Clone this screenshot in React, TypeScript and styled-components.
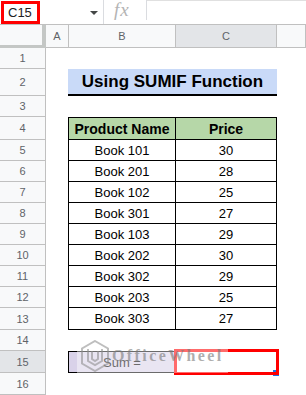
import React from "react";
import styled, { createGlobalStyle } from "styled-components";

const GlobalStyle = createGlobalStyle`
  html, body { margin: 0; padding: 0; background: #ffffff; }
  body {
    font-family: Arial, "Liberation Sans", sans-serif;
    width: 306px;
    height: 395px;
    overflow: hidden;
  }
`;

const BODY_COLS = "46px 22px 108px 101px 1fr";
const HEAD_COLS = "46px 23px 107px 101px 1fr";

const Page = styled.div`
  position: relative;
  width: 306px;
  height: 395px;
  overflow: hidden;
  background: #ffffff;
`;

/* ---------- Formula bar ---------- */
const FormulaBar = styled.div`
  display: flex;
  align-items: flex-start;
  height: 25px;
  box-sizing: border-box;
  border-bottom: 1px solid #c0c0c0;
`;

const NameArea = styled.div`
  display: flex;
  align-items: flex-start;
  width: 104px;
  height: 24px;
  box-sizing: border-box;
  border-right: 1px solid #dadce0;
`;

const NameBox = styled.div`
  box-sizing: border-box;
  margin: 1px 0 0 1px;
  width: 39px;
  height: 23px;
  border: 3px solid #ff0000;
  padding-left: 4px;
  display: flex;
  align-items: center;
  font-size: 13px;
  color: #202124;
`;

const DropArrow = styled.svg`
  margin: 11px 0 0 50px;
`;

const FxBox = styled.div`
  width: 43px;
  height: 20px;
  box-sizing: border-box;
  border-right: 1px solid #dadce0;
  display: flex;
  align-items: center;
  padding-left: 10px;
  font-family: "Liberation Serif", "Times New Roman", serif;
  font-style: italic;
  font-size: 19px;
  line-height: 20px;
  letter-spacing: 1px;
  color: #b4b4b4;
`;

const FormulaInput = styled.div`
  flex: 1;
  height: 19px;
  border-top: 1px solid #e0e0e0;
`;

/* ---------- Grid ---------- */
const Sheet = styled.div`
  display: flex;
  flex-direction: column;
`;

const Row = styled.div<{ $h: number; $cols: string }>`
  display: grid;
  grid-template-columns: ${(p) => p.$cols};
  height: ${(p) => p.$h}px;
`;

const Corner = styled.div`
  box-sizing: border-box;
  background: #f8f9fa;
  border-right: 4px solid #c4c7c5;
  border-bottom: 3px solid #c4c7c5;
`;

const ColHeader = styled.div<{ $sel?: boolean }>`
  box-sizing: border-box;
  background: ${(p) => (p.$sel ? "#e3e5e8" : "#f8f9fa")};
  border-right: 1px solid #c0c0c0;
  border-bottom: 1px solid #c0c0c0;
  display: flex;
  align-items: center;
  justify-content: center;
  font-size: 11px;
  color: #5f6368;
`;

const RowHeader = styled.div<{ $sel?: boolean }>`
  box-sizing: border-box;
  background: ${(p) => (p.$sel ? "#e3e5e8" : "#f8f9fa")};
  border-right: 1px solid #c0c0c0;
  border-bottom: 1px solid #c0c0c0;
  display: flex;
  align-items: center;
  justify-content: center;
  font-size: 11px;
  color: #5f6368;
`;

const Blank = styled.div``;

const TitleCell = styled.div`
  grid-column: span 2;
  box-sizing: border-box;
  background: #c9daf8;
  border-bottom: 2px solid #000000;
  display: flex;
  align-items: center;
  justify-content: center;
  padding-top: 1px;
  font-weight: bold;
  font-size: 17px;
  color: #000000;
`;

const TableCell = styled.div<{ $head?: boolean; $left?: boolean; $top?: boolean }>`
  box-sizing: border-box;
  border-right: 1px solid #000000;
  border-bottom: 1px solid #000000;
  ${(p) => (p.$left ? "border-left: 1px solid #000000;" : "")}
  ${(p) => (p.$top ? "border-top: 1px solid #000000;" : "")}
  background: ${(p) => (p.$head ? "#b6d7a8" : "transparent")};
  display: flex;
  align-items: center;
  justify-content: center;
  font-size: ${(p) => (p.$head ? 14 : 13)}px;
  font-weight: ${(p) => (p.$head ? "bold" : "normal")};
  color: #000000;
`;

const SumCell = styled.div`
  box-sizing: border-box;
  border: 1px solid #000000;
  background: #d9d2e9;
  display: flex;
  align-items: center;
  justify-content: center;
  font-size: 13px;
  color: #000000;
`;

const SelCell = styled.div`
  position: relative;
`;

const Selection = styled.div`
  position: absolute;
  left: -2px;
  top: -2px;
  right: -2px;
  bottom: -2px;
  border: 3px solid #ff0000;
  z-index: 2;
`;

const FillHandle = styled.div`
  position: absolute;
  right: -2px;
  bottom: -3px;
  width: 6px;
  height: 6px;
  background: #1a73e8;
  z-index: 1;
`;

/* ---------- Watermark ---------- */
const Watermark = styled.div`
  position: absolute;
  left: 77px;
  top: 337px;
  width: 151px;
  height: 36px;
  background: rgba(255, 255, 255, 0.42);
  z-index: 5;
  display: flex;
  align-items: flex-start;
  pointer-events: none;
`;

const WatermarkLogo = styled.svg`
  margin: 3px 0 0 3px;
  opacity: 0.55;
`;

const WatermarkText = styled.div`
  margin: 10px 0 0 2px;
  font-family: "Liberation Serif", "Times New Roman", serif;
  font-weight: bold;
  font-size: 16px;
  letter-spacing: 2.4px;
  color: rgba(120, 120, 120, 0.6);
`;

const rowHeights = [21, 27, 21, 23, 21, 21, 21, 21, 21, 21, 21, 21, 22, 21, 22, 22];

const data: [string, string][] = [
  ["Book 101", "30"],
  ["Book 201", "28"],
  ["Book 102", "25"],
  ["Book 301", "27"],
  ["Book 103", "29"],
  ["Book 202", "30"],
  ["Book 302", "29"],
  ["Book 203", "25"],
  ["Book 303", "27"],
];

export default function App() {
  const renderCells = (r: number) => {
    if (r === 2) {
      return (
        <>
          <Blank />
          <TitleCell>Using SUMIF Function</TitleCell>
          <Blank />
        </>
      );
    }
    if (r === 4) {
      return (
        <>
          <Blank />
          <TableCell $head $left $top>
            Product Name
          </TableCell>
          <TableCell $head $top>
            Price
          </TableCell>
          <Blank />
        </>
      );
    }
    if (r >= 5 && r <= 13) {
      const [name, price] = data[r - 5];
      return (
        <>
          <Blank />
          <TableCell $left>{name}</TableCell>
          <TableCell>{price}</TableCell>
          <Blank />
        </>
      );
    }
    if (r === 15) {
      return (
        <>
          <Blank />
          <SumCell>Sum =</SumCell>
          <SelCell>
            <FillHandle />
            <Selection />
          </SelCell>
          <Blank />
        </>
      );
    }
    return (
      <>
        <Blank />
        <Blank />
        <Blank />
        <Blank />
      </>
    );
  };

  return (
    <Page>
      <GlobalStyle />
      <FormulaBar>
        <NameArea>
          <NameBox>C15</NameBox>
          <DropArrow width="8" height="4" viewBox="0 0 8 4">
            <path d="M0 0 L8 0 L4 4 Z" fill="#444746" />
          </DropArrow>
        </NameArea>
        <FxBox>fx</FxBox>
        <FormulaInput />
      </FormulaBar>
      <Sheet>
        <Row $h={23} $cols={HEAD_COLS}>
          <Corner />
          <ColHeader>A</ColHeader>
          <ColHeader>B</ColHeader>
          <ColHeader $sel>C</ColHeader>
          <ColHeader />
        </Row>
        {rowHeights.map((h, i) => {
          const r = i + 1;
          return (
            <Row key={r} $h={h} $cols={BODY_COLS}>
              <RowHeader $sel={r === 15}>{r}</RowHeader>
              {renderCells(r)}
            </Row>
          );
        })}
      </Sheet>
      <Watermark>
        <WatermarkLogo width="30" height="32" viewBox="0 0 30 32" fill="none" stroke="#8a8a8a" strokeWidth="2">
          <path d="M15 1 L28 8.5 L28 23.5 L15 31 L2 23.5 L2 8.5 Z" />
          <path d="M8 9 V21 L15 25 L22 21 V9" />
          <path d="M12 11 V19 L15 21 L18 19 V11" />
        </WatermarkLogo>
        <WatermarkText>OfficeWheel</WatermarkText>
      </Watermark>
    </Page>
  );
}
